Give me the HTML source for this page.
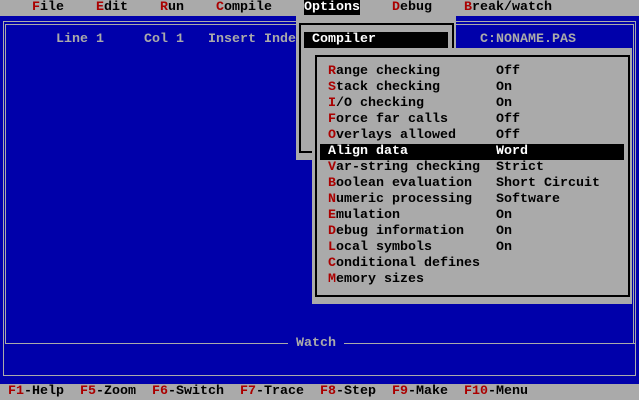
<!DOCTYPE html>
<html><head><meta charset="utf-8">
<style>
*{margin:0;padding:0;box-sizing:border-box}
body{width:639px;height:400px;overflow:hidden;background:#0000aa;position:relative;
font-family:"Liberation Mono",monospace;font-size:13.33px;font-weight:bold;line-height:16px}
.a{position:absolute;white-space:pre}
.r{color:#aa0000}
.bar{position:absolute;left:0;width:640px;height:16px;background:#aaaaaa;color:#000}
.l{position:absolute;background:#aaaaaa}
.k{position:absolute;background:#000}
.g{color:#aaaaaa}
</style></head><body>
<!-- editor frame double -->
<div class="l" style="left:3px;top:21px;width:633px;height:1px"></div>
<div class="l" style="left:5px;top:24px;width:629px;height:1px"></div>
<div class="l" style="left:3px;top:21px;width:1px;height:355px"></div>
<div class="l" style="left:5px;top:24px;width:1px;height:320px"></div>
<div class="l" style="left:635px;top:21px;width:1px;height:355px"></div>
<div class="l" style="left:633px;top:24px;width:1px;height:320px"></div>
<!-- watch -->
<div class="l" style="left:5px;top:343px;width:283px;height:1px"></div>
<div class="l" style="left:344px;top:343px;width:291px;height:1px"></div>
<div class="l" style="left:3px;top:375px;width:633px;height:1px"></div>
<div class="a g" style="left:296px;top:336px">Watch</div>
<div class="a g" style="left:56px;top:32px">Line 1     Col 1   Insert Inde</div>
<div class="a g" style="left:480px;top:32px">C:NONAME.PAS</div>
<!-- options dropdown -->
<div class="l" style="left:296px;top:16px;width:160px;height:144px"></div>
<div class="k" style="left:299px;top:23px;width:155px;height:2px"></div>
<div class="k" style="left:299px;top:151px;width:155px;height:2px"></div>
<div class="k" style="left:299px;top:23px;width:2px;height:130px"></div>
<div class="k" style="left:452px;top:23px;width:2px;height:130px"></div>
<div class="k" style="left:304px;top:32px;width:144px;height:16px"></div>
<div class="a" style="left:312px;top:32px;color:#fff">Compiler</div>
<!-- compiler submenu -->
<div class="l" style="left:312px;top:48px;width:320px;height:256px"></div>
<div class="k" style="left:315px;top:55px;width:315px;height:2px"></div>
<div class="k" style="left:315px;top:295px;width:315px;height:2px"></div>
<div class="k" style="left:315px;top:55px;width:2px;height:242px"></div>
<div class="k" style="left:628px;top:55px;width:2px;height:242px"></div>
<div class="k" style="left:320px;top:144px;width:304px;height:16px"></div>
<div class="a" style="left:328px;top:64px;color:#000"><span class="r">R</span>ange checking       Off
<span class="r">S</span>tack checking       On
<span class="r">I</span>/O checking         On
<span class="r">F</span>orce far calls      Off
<span class="r">O</span>verlays allowed     Off
<span style="color:#fff">Align data           Word</span>
<span class="r">V</span>ar-string checking  Strict
<span class="r">B</span>oolean evaluation   Short Circuit
<span class="r">N</span>umeric processing   Software
<span class="r">E</span>mulation            On
<span class="r">D</span>ebug information    On
<span class="r">L</span>ocal symbols        On
<span class="r">C</span>onditional defines
<span class="r">M</span>emory sizes</div>
<!-- menu bar -->
<div class="bar" style="top:0"></div>
<div class="a" style="left:32px;top:0;color:#000"><span class="r">F</span>ile    <span class="r">E</span>dit    <span class="r">R</span>un    <span class="r">C</span>ompile    <span style="background:#000;color:#fff">Options</span>    <span class="r">D</span>ebug    <span class="r">B</span>reak/watch</div>
<!-- status bar -->
<div class="bar" style="top:384px"></div>
<div class="a" style="left:8px;top:384px;color:#000"><span class="r">F1</span>-Help  <span class="r">F5</span>-Zoom  <span class="r">F6</span>-Switch  <span class="r">F7</span>-Trace  <span class="r">F8</span>-Step  <span class="r">F9</span>-Make  <span class="r">F10</span>-Menu</div>
</body></html>
